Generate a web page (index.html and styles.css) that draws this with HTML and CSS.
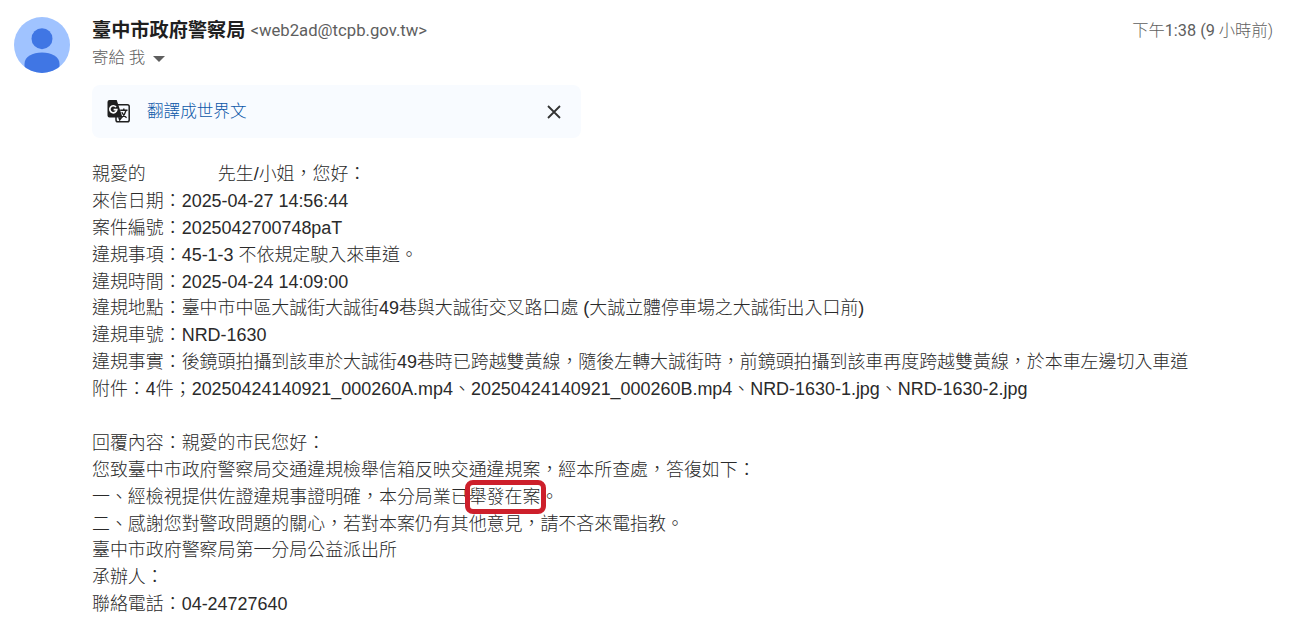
FILE: index.html
```html
<!DOCTYPE html>
<html lang="zh-TW">
<head>
  <meta charset="UTF-8">
  <meta name="viewport" content="width=device-width, initial-scale=1.0">
  <title>臺中市政府警察局</title>
  <link rel="stylesheet" href="styles.css">
</head>
<body>
  <article class="message">
    <!-- Avatar -->
    <svg class="avatar" viewBox="0 0 56 56">
      <defs>
        <clipPath id="avatarClip"><circle cx="28" cy="28" r="28"/></clipPath>
      </defs>
      <g clip-path="url(#avatarClip)">
        <rect width="56" height="56" fill="#a0c3ff"/>
        <circle cx="28" cy="21.7" r="10.5" fill="#4076e4"/>
        <path d="M10.5 60V47c0-7.500 8-11.500 17.500-11.500S45.500 39.500 45.500 47v13z" fill="#4076e4"/>
      </g>
    </svg>

    <div class="message-main">
      <!-- Header section -->
      <header class="message-header">
        <div class="sender">
          <span class="sender-name">臺中市政府警察局</span>
          <span class="sender-email">&lt;web2ad@tcpb.gov.tw&gt;</span>
        </div>
        <div class="date">下午<span class="digits">1:38 (9</span> 小時前)</div>
      </header>
      <div class="recipient">
        <span>寄給 我</span>
        <svg class="arrow" viewBox="0 0 12 6"><path d="M0 0h12L6 6z"/></svg>
      </div>

      <!-- Translate bar -->
      <div class="translate">
        <svg class="translate-icon" viewBox="0 0 24 24">
          <rect x="9" y="4.800" width="13.200" height="17" rx="1.800" fill="#f7faff" stroke="#1f1f1f" stroke-width="1.500"/>
          <path d="M2.500 0h7.200l5.800 17.500H2.500a2 2 0 0 1-2-2V2a2 2 0 0 1 2-2z" fill="#1f1f1f"/>
          <path d="M11 17.300h4.600l-3.100 4.200z" fill="#1f1f1f"/>
          <path d="M9 7A3.500 3.500 0 1 0 9.800 9.700H6.600" fill="none" stroke="#fff" stroke-width="1.700"/>
          <path d="M13.200 10.300h7.300M16.800 8.600v1.700M19 10.300c-.6 3-2.500 5.500-4.500 7.200M14.800 12.300c1 2.200 2.800 4 4.800 5.400" fill="none" stroke="#1f1f1f" stroke-width="1.400"/>
        </svg>
        <a href="#" class="translate-link">翻譯成世界文</a>
        <svg class="close" viewBox="0 0 14 14"><path d="M1 1l12 12M13 1L1 13"/></svg>
      </div>

      <!-- Mail content -->
      <div class="content">
        <p>親愛的<span class="blank"></span>先生/小姐，您好：</p>
        <p>來信日期：2025-04-27 14:56:44</p>
        <p>案件編號：2025042700748paT</p>
        <p>違規事項：45-1-3 不依規定駛入來車道。</p>
        <p>違規時間：2025-04-24 14:09:00</p>
        <p>違規地點：臺中市中區大誠街大誠街49巷與大誠街交叉路口處 (大誠立體停車場之大誠街出入口前)</p>
        <p>違規車號：NRD-1630</p>
        <p>違規事實：後鏡頭拍攝到該車於大誠街49巷時已跨越雙黃線，隨後左轉大誠街時，前鏡頭拍攝到該車再度跨越雙黃線，於本車左邊切入車道</p>
        <p>附件：4件；20250424140921_000260A.mp4、20250424140921_000260B.mp4、NRD-1630-1.jpg、NRD-1630-2.jpg</p>
        <br>
        <p>回覆內容：親愛的市民您好：</p>
        <p>您致臺中市政府警察局交通違規檢舉信箱反映交通違規案，經本所查處，答復如下：</p>
        <p>一、經檢視提供佐證違規事證明確，本分局業已<span class="marked">舉發在案</span>。</p>
        <p>二、感謝您對警政問題的關心，若對本案仍有其他意見，請不吝來電指教。</p>
        <p>臺中市政府警察局第一分局公益派出所</p>
        <p>承辦人：</p>
        <p>聯絡電話：04-24727640</p>
      </div>
    </div>
  </article>
</body>
</html>
```
FILE: styles.css
```css
* {
  box-sizing: border-box;
}
body {
  margin: 0;
  background-color: #fff;
  color: #2a2a2a;
  font-family: Roboto, "Noto Sans CJK TC", sans-serif;
}
.message {
  display: flex;
  padding: 17px 18px 0 14px;
}
.avatar {
  width: 56px;
  height: 56px;
  flex-shrink: 0;
  margin-right: 22px;
}
.message-main {
  flex: 1;
}

/* Header styles */
.message-header {
  display: flex;
  justify-content: space-between;
  height: 27px;
  line-height: 27px;
}
.sender {
  display: flex;
  gap: 5px;
}
.sender-name {
  font-size: 19.2px;
  font-weight: bold;
  color: #1f1f1f;
}
.sender-email {
  font-size: 16.700px;
  color: #5e5e5e;
}
.date {
  font-size: 16.300px;
  font-weight: 300;
  color: #5e5e5e;
}
.digits {
  font-weight: 400;
}
.recipient {
  display: flex;
  align-items: center;
  height: 27px;
  font-size: 16.400px;
  font-weight: 300;
  line-height: 25px;
  color: #5e5e5e;
}
.arrow {
  width: 12px;
  height: 6px;
  margin: 2px 0 0 8px;
  fill: #5e5e5e;
}

/* Translate bar styles */
.translate {
  display: flex;
  align-items: center;
  width: 489px;
  height: 53px;
  margin-top: 14px;
  padding: 0 20px 0 15px;
  border-radius: 8px;
  background-color: #f8fbff;
}
.translate-icon {
  width: 24px;
  height: 24px;
  margin-right: 16px;
}
.translate-link {
  flex: 1;
  margin-bottom: 3px;
  color: #0b57a8;
  font-size: 16.600px;
  font-weight: 300;
  text-decoration: none;
}
.close {
  width: 14px;
  height: 14px;
  fill: none;
  stroke: #333;
  stroke-width: 1.800;
}

/* Mail content styles */
.content {
  margin-top: 23px;
  font-family: "Liberation Sans", "Noto Sans CJK TC", sans-serif;
  font-size: 17.940px;
  font-weight: 300;
  line-height: 26.900px;
  white-space: nowrap;
}
.content p {
  margin: 0;
  height: 26.900px;
}
.blank {
  display: inline-block;
  width: 72px;
}
.marked {
  position: relative;
}
.marked::after {
  content: "";
  position: absolute;
  box-sizing: border-box;
  top: -7px;
  left: -4px;
  width: 81px;
  height: 34px;
  border: 5px solid #cd1f2b;
  border-radius: 8px;
}
```
